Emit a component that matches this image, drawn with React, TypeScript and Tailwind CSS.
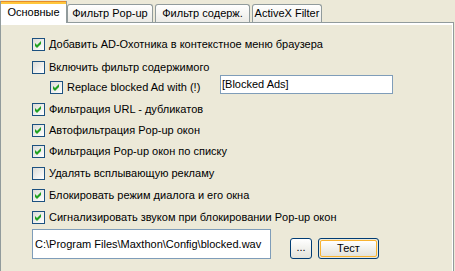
import React from "react";

const Check = ({ checked }: { checked: boolean }) => (
  <span className="flex-none w-[13px] h-[13px] border border-[#1C5180] bg-gradient-to-br from-[#DCDCD7] to-white block">
    {checked && (
      <svg width="11" height="11" viewBox="0 0 11 11" className="block">
        <path d="M2 4 L4 6 L8 2 L8 5 L4 9 L2 7 Z" fill="#21A121" />
      </svg>
    )}
  </span>
);

const Row = ({
  checked,
  label,
  mt,
  ml = "ml-0",
}: {
  checked: boolean;
  label: string;
  mt: string;
  ml?: string;
}) => (
  <div className={`flex items-center h-[13px] ${mt} ${ml}`}>
    <Check checked={checked} />
    <span className="ml-[4px] whitespace-nowrap leading-none">{label}</span>
  </div>
);

export default function App() {
  return (
    <div
      className="w-[455px] h-[271px] bg-[#ECE9D8] overflow-hidden text-[11px] text-black"
      style={{ fontFamily: '"Liberation Sans", Arial, sans-serif' }}
    >
      {/* Tabs */}
      <div className="flex items-end h-[22px] pt-[1px]">
        <div className="relative z-10 mb-[-1px] w-[67px] h-[22px] bg-white border-x border-[#919B9C] flex flex-col">
          <div className="h-[1px] bg-[#E68B2C]" />
          <div className="h-[2px] bg-[#FFC73C]" />
          <div className="flex-1 flex items-center justify-center pb-[2px]">Основные</div>
        </div>
        <div className="w-[86px] h-[18px] border border-b-0 border-[#919B9C] rounded-t-[3px] bg-gradient-to-b from-white to-[#ECEBE6] flex items-center justify-center">
          Фильтр Pop-up
        </div>
        <div className="ml-[2px] w-[95px] h-[18px] border border-b-0 border-[#919B9C] rounded-t-[3px] bg-gradient-to-b from-white to-[#ECEBE6] flex items-center justify-center">
          Фильтр содерж.
        </div>
        <div className="ml-[2px] w-[70px] h-[18px] border border-b-0 border-[#919B9C] rounded-t-[3px] bg-gradient-to-b from-white to-[#ECEBE6] flex items-center justify-center">
          ActiveX Filter
        </div>
      </div>

      {/* Panel */}
      <div className="w-[454px] h-[260px] border border-[#919B9C] bg-[#ECE9D8]">
        <div className="h-full border-t-2 border-r border-white pl-[31px] pt-[13px] flex flex-col">
          <Row checked label="Добавить AD-Охотника в контекстное меню браузера" mt="mt-0" />
          <Row checked={false} label="Включить фильтр содержимого" mt="mt-[10px]" />
          <div className="flex items-start mt-[1px]">
            <div className="flex items-center h-[13px] mt-[6px] ml-[18px] w-[170px]">
              <Check checked />
              <span className="ml-[4px] whitespace-nowrap leading-none">Replace blocked Ad with (!)</span>
            </div>
            <div className="w-[173px] h-[19px] border border-[#7F9DB9] bg-white flex items-center pl-[1px] leading-none">
              [Blocked Ads]
            </div>
          </div>
          <Row checked label="Фильтрация URL - дубликатов" mt="mt-[9px]" />
          <Row checked label="Автофильтрация Pop-up окон" mt="mt-[8px]" />
          <Row checked label="Фильтрация Pop-up окон по списку" mt="mt-[8px]" />
          <Row checked={false} label="Удалять всплывающую рекламу" mt="mt-[9px]" />
          <Row checked label="Блокировать режим диалога и его окна" mt="mt-[9px]" />
          <Row checked label="Сигнализировать звуком при блокировании Pop-up окон" mt="mt-[9px]" />
          <div className="flex items-start mt-[5px]">
            <div className="w-[239px] h-[30px] border border-[#7F9DB9] bg-white flex items-center pl-[2px] whitespace-nowrap leading-none overflow-hidden">
              C:\Program Files\Maxthon\Config\blocked.wav
            </div>
            <div className="ml-[19px] mt-[9px] w-[22px] h-[21px] border border-[#003C74] rounded-[3px] bg-gradient-to-b from-white to-[#E3E3DB] flex items-center justify-center leading-none pb-[2px]">
              ...
            </div>
            <div className="ml-[6px] mt-[9px] w-[61px] h-[21px] border border-[#003C74] rounded-[3px] p-[1px]">
              <div className="w-full h-full rounded-[2px] border border-[#F8B330] bg-gradient-to-b from-white to-[#E3E3DB] flex items-center justify-center leading-none">
                Тест
              </div>
            </div>
          </div>
        </div>
      </div>
    </div>
  );
}
